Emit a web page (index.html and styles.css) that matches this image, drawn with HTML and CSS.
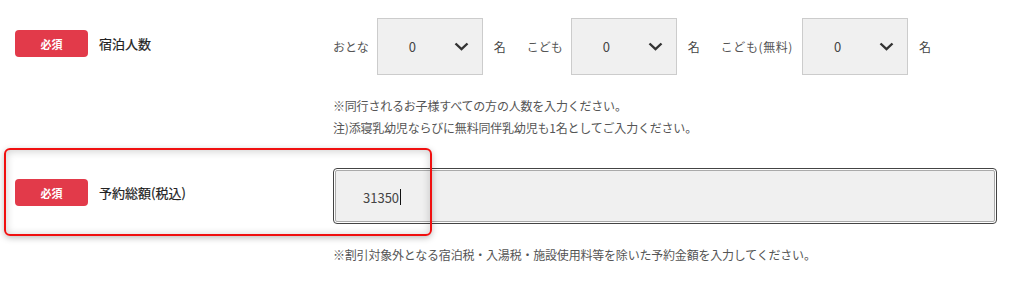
FILE: index.html
```html
<!DOCTYPE html>
<html lang="ja">
<head>
    <meta charset="UTF-8">
    <meta name="viewport" content="width=device-width, initial-scale=1.0">
    <title>予約フォーム</title>
    <link rel="stylesheet" href="styles.css">
</head>
<body>
    <div class="form">
        <div class="form-row row-guests">
            <div class="row-head">
                <span class="badge">必須</span>
                <span class="row-label">宿泊人数</span>
            </div>
            <div class="row-body">
                <div class="counts">
                    <div class="count">
                        <span class="count-label">おとな</span>
                        <div class="select">
                            <span>0</span>
                            <svg class="chevron" width="15" height="9" viewBox="0 0 15 9"><path d="M1.5 1.5 L7.5 7.2 L13.5 1.5" /></svg>
                        </div>
                        <span class="unit">名</span>
                    </div>
                    <div class="count">
                        <span class="count-label">こども</span>
                        <div class="select">
                            <span>0</span>
                            <svg class="chevron" width="15" height="9" viewBox="0 0 15 9"><path d="M1.5 1.5 L7.5 7.2 L13.5 1.5" /></svg>
                        </div>
                        <span class="unit">名</span>
                    </div>
                    <div class="count count-free">
                        <span class="count-label">こども(無料)</span>
                        <div class="select">
                            <span>0</span>
                            <svg class="chevron" width="15" height="9" viewBox="0 0 15 9"><path d="M1.5 1.5 L7.5 7.2 L13.5 1.5" /></svg>
                        </div>
                        <span class="unit">名</span>
                    </div>
                </div>
                <p class="note">※同行されるお子様すべての方の人数を入力ください。<br>注)添寝乳幼児ならびに無料同伴乳幼児も1名としてご入力ください。</p>
            </div>
        </div>

        <div class="form-row row-total">
            <div class="row-head">
                <span class="badge">必須</span>
                <span class="row-label">予約総額(税込)</span>
            </div>
            <div class="row-body">
                <div class="amount-input">
                    <span>31350</span><span class="caret"></span>
                </div>
                <p class="note">※割引対象外となる宿泊税・入湯税・施設使用料等を除いた予約金額を入力してください。</p>
            </div>
            <!-- 注目枠 -->
            <div class="highlight"></div>
        </div>
    </div>
</body>
</html>
```

FILE: styles.css
```css
:root {
    --badge-color: #e23a4a;
    --text-color: #333;
    --note-color: #555;
    --field-bg: #f0f0f0;
}

body {
    margin: 0;
    background: #fff;
    font-family: "Noto Sans CJK JP", sans-serif;
    color: var(--text-color);
}

.form {
    padding-top: 18px;
}

.form-row {
    display: grid;
    grid-template-columns: 333px 664px;
    position: relative;
}

.row-head {
    display: flex;
    align-items: center;
    align-self: start;
    gap: 11px;
    padding-left: 15px;
}

.row-guests .row-head {
    padding-top: 12px;
}

.row-total {
    margin-top: 29px;
}

.row-total .row-head {
    padding-top: 11px;
}

.badge {
    width: 73px;
    height: 27px;
    border-radius: 4px;
    background: var(--badge-color);
    color: #fff;
    font-size: 11px;
    font-weight: 700;
    display: flex;
    align-items: center;
    justify-content: center;
}

.row-label {
    font-size: 13px;
    font-weight: 400;
    color: #222;
    -webkit-text-stroke: 0.2px #222;
}

.counts {
    display: flex;
    align-items: center;
    gap: 21px;
}

.count {
    display: flex;
    align-items: center;
    font-size: 12px;
    color: var(--note-color);
}

.count-label {
    margin-right: 8px;
}

.count-free .count-label {
    letter-spacing: 0.6px;
    margin-right: 9px;
}

.unit {
    margin-left: 11px;
    color: #444;
}

.select {
    box-sizing: border-box;
    width: 106px;
    height: 57px;
    border: 1px solid #ccc;
    background: var(--field-bg);
    display: flex;
    align-items: center;
    justify-content: space-between;
    padding: 0 13px 0 31px;
    font-size: 13px;
    color: #444;
}

.chevron path {
    fill: none;
    stroke: #333;
    stroke-width: 2.4;
}

.note {
    margin: 20px 0 0;
    font-size: 12px;
    line-height: 22px;
    letter-spacing: -0.2px;
    color: var(--note-color);
}

.amount-input {
    box-sizing: border-box;
    margin: 2px;
    height: 52px;
    border: 1px solid #aaa;
    border-radius: 2px;
    outline: 1px solid #444;
    outline-offset: 1px;
    background: var(--field-bg);
    display: flex;
    align-items: center;
    padding: 2px 0 0 27px;
    font-size: 13px;
    color: #444;
}

.caret {
    width: 1px;
    height: 16px;
    background: #111;
    margin-left: 1px;
}

.row-total .note {
    margin-top: 22px;
}

.highlight {
    position: absolute;
    left: 4px;
    top: -20px;
    width: 428px;
    height: 88px;
    box-sizing: border-box;
    border: 2px solid #f01010;
    border-radius: 6px;
    box-shadow: 0 2px 6px rgba(0,0,0,0.25), inset 0 1px 8px rgba(0,0,0,0.2);
    pointer-events: none;
}
```
